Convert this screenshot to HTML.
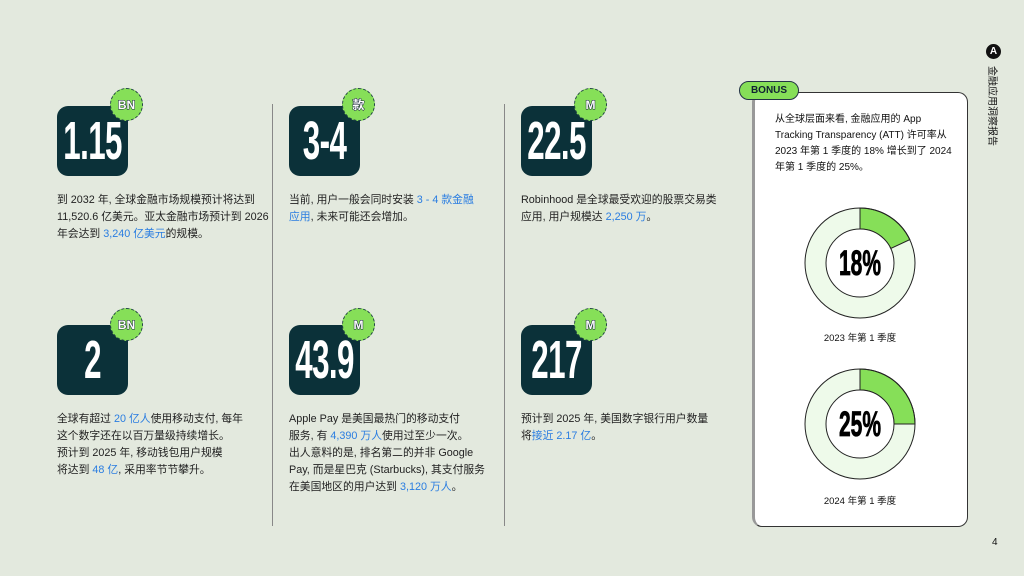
<!DOCTYPE html>
<html><head><meta charset="utf-8"><style>
*{margin:0;padding:0;box-sizing:border-box}
body{width:1024px;height:576px;background:#e3e9de;position:relative;overflow:hidden;font-family:"Liberation Sans","Noto Sans CJK SC",sans-serif;color:#222}
.tile{position:absolute;width:71px;height:70px;background:#0b3139;border-radius:11px;color:#fff;font-family:"Liberation Sans Narrow","Liberation Sans",sans-serif;font-weight:bold;font-size:54px;display:flex;align-items:center;justify-content:center;letter-spacing:-1px;white-space:nowrap}
.tile span{display:inline-block;transform:scaleX(0.58);white-space:nowrap}
.badge{position:absolute;width:33px;height:33px;border-radius:50%;background:#86df58;border:1px dashed #244;display:flex;align-items:center;justify-content:center;font-size:12px;font-weight:bold;color:#fff;-webkit-text-stroke:1px #123;paint-order:stroke fill;font-family:"Liberation Sans","Noto Sans CJK SC",sans-serif}
.txt{position:absolute;font-size:10.8px;line-height:17px;color:#222;width:215px}
.b{color:#2a7de1}
.div{position:absolute;width:1px;background:#888;top:104px;height:422px}
</style></head><body>
<div class="div" style="left:272px"></div>
<div class="div" style="left:504px"></div>

<div class="tile" style="left:57px;top:106px"><span>1.15</span></div>
<div class="badge" style="left:110px;top:88px">BN</div>
<div class="txt" style="left:57px;top:192px">到 2032 年, 全球金融市场规模预计将达到 11,520.6 亿美元。亚太金融市场预计到 2026 年会达到 <span class="b">3,240 亿美元</span>的规模。</div>

<div class="tile" style="left:289px;top:106px"><span>3-4</span></div>
<div class="badge" style="left:342px;top:88px">款</div>
<div class="txt" style="left:289px;top:192px;width:200px">当前, 用户一般会同时安装 <span class="b">3 - 4 款金融<br>应用</span>, 未来可能还会增加。</div>

<div class="tile" style="left:521px;top:106px"><span>22.5</span></div>
<div class="badge" style="left:574px;top:88px">M</div>
<div class="txt" style="left:521px;top:192px;width:205px">Robinhood 是全球最受欢迎的股票交易类应用, 用户规模达 <span class="b">2,250 万</span>。</div>

<div class="tile" style="left:57px;top:325px"><span>2</span></div>
<div class="badge" style="left:110px;top:308px">BN</div>
<div class="txt" style="left:57px;top:411px;width:200px">全球有超过 <span class="b">20 亿人</span>使用移动支付, 每年<br>这个数字还在以百万量级持续增长。<br>预计到 2025 年, 移动钱包用户规模<br>将达到 <span class="b">48 亿</span>, 采用率节节攀升。</div>

<div class="tile" style="left:289px;top:325px"><span>43.9</span></div>
<div class="badge" style="left:342px;top:308px">M</div>
<div class="txt" style="left:289px;top:411px;width:212px">Apple Pay 是美国最热门的移动支付<br>服务, 有 <span class="b">4,390 万人</span>使用过至少一次。<br>出人意料的是, 排名第二的并非 Google<br>Pay, 而是星巴克 (Starbucks), 其支付服务<br>在美国地区的用户达到 <span class="b">3,120 万人</span>。</div>

<div class="tile" style="left:521px;top:325px"><span>217</span></div>
<div class="badge" style="left:574px;top:308px">M</div>
<div class="txt" style="left:521px;top:411px;width:205px">预计到 2025 年, 美国数字银行用户数量<br>将<span class="b">接近 2.17 亿</span>。</div>

<div style="position:absolute;left:752px;top:92px;width:216px;height:435px;background:#fff;border:1px solid #333;border-radius:10px;border-left:3px solid #999"></div>
<div style="position:absolute;left:739px;top:81px;width:60px;height:19px;background:#86df58;border:1px solid #234;border-radius:10px;font-size:10px;font-weight:bold;color:#123;text-align:center;line-height:17px">BONUS</div>
<div style="position:absolute;left:775px;top:112px;width:180px;font-size:10px;line-height:16px;color:#111">从全球层面来看, 金融应用的 App Tracking Transparency (ATT) 许可率从 2023 年第 1 季度的 18% 增长到了 2024 年第 1 季度的 25%。</div>

<svg style="position:absolute;left:800px;top:203px" width="120" height="120" viewBox="-60 -60 120 120">
<circle r="44.5" fill="none" stroke="#eefaea" stroke-width="21"/>
<path d="M0,-55 A55,55 0 0 1 49.8,-23.4 L30.8,-14.5 A34,34 0 0 0 0,-34 Z" fill="#86df58" stroke="#222" stroke-width="1"/>
<circle r="55" fill="none" stroke="#222" stroke-width="1"/>
<circle r="34" fill="#fff" stroke="#222" stroke-width="1"/>
<text x="0" y="12" text-anchor="middle" font-family="Liberation Sans Narrow,Liberation Sans,sans-serif" font-weight="bold" font-size="35" fill="#000" stroke="#000" stroke-width="0.8" transform="scale(0.6,1)">18%</text>
</svg>
<div style="position:absolute;left:800px;top:330px;width:120px;text-align:center;font-size:9.5px;color:#111">2023 年第 1 季度</div>

<svg style="position:absolute;left:800px;top:364px" width="120" height="120" viewBox="-60 -60 120 120">
<circle r="44.5" fill="none" stroke="#eefaea" stroke-width="21"/>
<path d="M0,-55 A55,55 0 0 1 55,0 L34,0 A34,34 0 0 0 0,-34 Z" fill="#86df58" stroke="#222" stroke-width="1"/>
<circle r="55" fill="none" stroke="#222" stroke-width="1"/>
<circle r="34" fill="#fff" stroke="#222" stroke-width="1"/>
<text x="0" y="12" text-anchor="middle" font-family="Liberation Sans Narrow,Liberation Sans,sans-serif" font-weight="bold" font-size="35" fill="#000" stroke="#000" stroke-width="0.8" transform="scale(0.6,1)">25%</text>
</svg>
<div style="position:absolute;left:800px;top:493px;width:120px;text-align:center;font-size:9.5px;color:#111">2024 年第 1 季度</div>

<div style="position:absolute;left:986px;top:44px;width:15px;height:15px;border-radius:50%;background:#111;color:#fff;font-size:10px;font-weight:bold;text-align:center;line-height:15px">A</div>
<div style="position:absolute;left:986px;top:66px;writing-mode:vertical-rl;text-orientation:sideways;font-size:10px;color:#111;letter-spacing:0">金融应用洞察报告</div>
<div style="position:absolute;left:992px;top:537px;font-size:10px;color:#111">4</div>
</body></html>
